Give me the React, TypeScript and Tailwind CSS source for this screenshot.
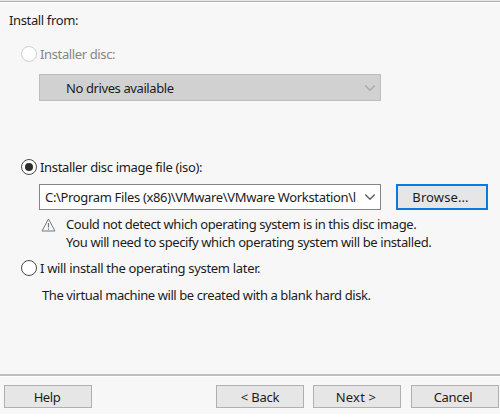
import React from "react";

function Radio({ checked = false, disabled = false }: { checked?: boolean; disabled?: boolean }) {
  return (
    <span
      className={`flex size-4 shrink-0 items-center justify-center rounded-full border bg-white ${
        disabled ? "border-[#cfcfcf]" : "border-[#4a4a4a]"
      }`}
    >
      {checked && <span className="size-2 rounded-full bg-[#2b2b2b]" />}
    </span>
  );
}

function Chevron({ className }: { className: string }) {
  return (
    <svg className={className} width="12" height="8" viewBox="0 0 12 8" fill="none" stroke="currentColor" strokeWidth="1.4">
      <path d="M1.3 1.5 6 6.2l4.7-4.7" />
    </svg>
  );
}

function Button({ children, className }: { children: React.ReactNode; className: string }) {
  return (
    <button className={`flex h-[23px] shrink-0 items-center justify-center border border-[#b0b0b0] bg-[#e6e6e6] ${className}`}>
      {children}
    </button>
  );
}

export default function App() {
  return (
    <div className="h-[417px] w-[500px] overflow-hidden bg-white font-['Noto_Sans',sans-serif] text-[13px] leading-[18px] whitespace-nowrap text-[#1c1c1c]">
      <div className="flex h-[414px] flex-col bg-[#f7f7f7]">
        <div className="h-[3px] shrink-0 border-t border-b border-t-[#e8e8e8] border-b-white bg-[#b0b0b0]" />
        <main className="h-[371px] shrink-0 pt-2">
          <p className="pl-[9px] tracking-[-0.36px]">Install from:</p>
          <div className="mt-[16px] flex items-center gap-[3px] pl-[21px] text-[#868686]">
            <Radio disabled />
            <span className="tracking-[-0.37px]">Installer disc:</span>
          </div>
          <div className="mt-[11px] ml-[39px] flex h-[27px] w-[342px] items-center justify-between border border-[#bdbdbd] bg-[#d1d1d1] pr-[4px] pl-[26px]">
            <span className="tracking-[-0.4px]">No drives available</span>
            <Chevron className="text-[#aaaaaa]" />
          </div>
          <div className="mt-[57px] flex items-center gap-[3px] pl-[21px]">
            <Radio checked />
            <span className="tracking-[-0.33px]">Installer disc image file (iso):</span>
          </div>
          <div className="mt-2 ml-[39px] flex">
            <div className="flex h-[26px] w-[342px] items-center justify-between border border-[#858585] bg-white pr-[4px] pl-[5px]">
              <span className="tracking-[-0.34px]">C:\Program Files (x86)\VMware\VMware Workstation\l</span>
              <Chevron className="text-[#606060]" />
            </div>
            <button className="ml-[15px] flex h-[26px] w-[92px] items-center justify-center border-2 border-[#0b7ade] bg-[#e6e6e6] pr-[3px] tracking-[0.1px]">
              Browse...
            </button>
          </div>
          <div className="mt-[5px] flex pl-[41px]">
            <svg className="mt-[3px] mr-[10px] shrink-0" width="15" height="14" viewBox="0 0 15 14" fill="none" stroke="#6f7a84">
              <path d="M7.5 1 14 13H1Z" />
              <path d="M7.5 5v4.5M7.5 10.5v1.2" strokeWidth="1.2" />
            </svg>
            <div>
              <p className="tracking-[-0.41px]">Could not detect which operating system is in this disc image.</p>
              <p className="tracking-[-0.4px]">You will need to specify which operating system will be installed.</p>
            </div>
          </div>
          <div className="mt-[8px] flex items-center gap-[3px] pl-[21px]">
            <Radio />
            <span className="tracking-[-0.32px]">I will install the operating system later.</span>
          </div>
          <p className="mt-[9px] pl-[42px] tracking-[-0.41px]">The virtual machine will be created with a blank hard disk.</p>
        </main>
        <footer className="flex grow border-t-2 border-[#bfbfbf]">
          <div className="flex grow border-t border-white pt-[8px] pl-1">
            <Button className="w-[88px] pr-[2px] tracking-[-0.4px]">Help</Button>
            <Button className="ml-[124px] w-[88px] tracking-[-0.2px]">&lt; Back</Button>
            <Button className="ml-[9px] w-[88px] pr-[2px] tracking-[0.2px]">Next &gt;</Button>
            <Button className="ml-[10px] w-[88px] pr-[4px] tracking-[-0.3px]">Cancel</Button>
          </div>
        </footer>
      </div>
    </div>
  );
}
